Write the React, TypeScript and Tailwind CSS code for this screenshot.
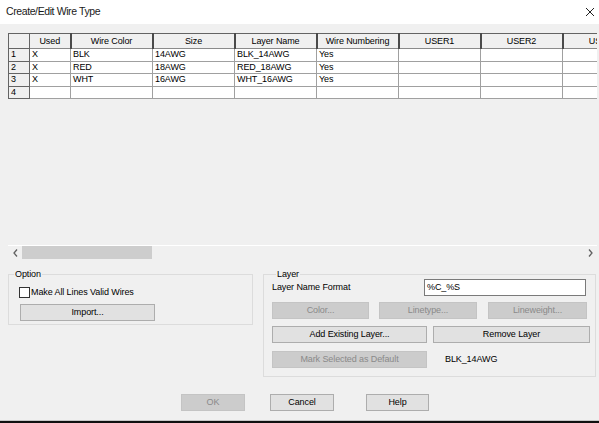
const columns = [
  { name: 'Used', cls: 'w-[41px]' },
  { name: 'Wire Color', cls: 'w-[82px]' },
  { name: 'Size', cls: 'w-[82px]' },
  { name: 'Layer Name', cls: 'w-[82px]' },
  { name: 'Wire Numbering', cls: 'w-[82px]' },
  { name: 'USER1', cls: 'w-[82px]' },
  { name: 'USER2', cls: 'w-[82px]' },
  { name: 'USER3', cls: 'w-[82px]' },
];

const rows = [
  ['X', 'BLK', '14AWG', 'BLK_14AWG', 'Yes', '', '', ''],
  ['X', 'RED', '18AWG', 'RED_18AWG', 'Yes', '', '', ''],
  ['X', 'WHT', '16AWG', 'WHT_16AWG', 'Yes', '', '', ''],
  ['', '', '', '', '', '', '', ''],
];

const Button = ({ label, cls, disabled }: { label: string; cls: string; disabled?: boolean }) => (
  <div
    className={
      'h-[17px] flex items-center justify-center border ' +
      (disabled
        ? 'bg-[#cccccc] border-[#c4c4c4] text-[#8a8a8a] '
        : 'bg-[#e1e1e1] border-[#adadad] text-black ') +
      cls
    }
  >
    {label}
  </div>
);

const Grid = () => (
  <div className="ml-[8px] w-[589px] h-[226px] flex flex-col">
    <div className="overflow-hidden w-[589px]">
      <table className="table-fixed border-collapse w-[636px] border-t border-l border-[#646464]">
        <thead>
          <tr className="h-[15px]">
            <th className="w-[21px] bg-[#f0f0f0] border-r border-b border-[#646464] p-0" />
            {columns.map((c) => (
              <th
                key={c.name}
                className={c.cls + ' bg-[#f0f0f0] border-r-2 border-b border-r-[#4a4a4a] border-b-[#8a8a8a] p-0 font-normal text-center leading-[13px] whitespace-nowrap'}
              >
                {c.name}
              </th>
            ))}
          </tr>
        </thead>
        <tbody>
          {rows.map((r, i) => (
            <tr key={i} className="h-[12.5px]">
              <td className="bg-[#f0f0f0] border-r border-b border-[#646464] p-0 pl-[2px] leading-[11px]">{i + 1}</td>
              {r.map((v, j) => (
                <td key={j} className="bg-white border-r border-b border-[#a0a0a0] p-0 pl-[2px] leading-[11px] whitespace-nowrap overflow-hidden">
                  {v}
                </td>
              ))}
            </tr>
          ))}
        </tbody>
      </table>
    </div>
    <div className="flex-1" />
    <div className="h-[14px] border-t border-white flex">
      <div className="w-[14px] flex items-center justify-center">
        <svg width="5" height="8" viewBox="0 0 5 8">
          <path d="M4 0.5 L1 4 L4 7.5" fill="none" stroke="#606060" strokeWidth="1.3" />
        </svg>
      </div>
      <div className="w-[130px] bg-[#cdcdcd]" />
      <div className="flex-1" />
      <div className="w-[14px] flex items-center justify-center">
        <svg width="5" height="8" viewBox="0 0 5 8">
          <path d="M1 0.5 L4 4 L1 7.5" fill="none" stroke="#606060" strokeWidth="1.3" />
        </svg>
      </div>
    </div>
  </div>
);

export default function App() {
  return (
    <div className="w-[599px] h-[423px] overflow-hidden flex flex-col font-['Liberation_Sans',Arial,sans-serif] text-[9px] text-black tracking-[-0.1px]">
      <div className="h-[24px] bg-white flex items-center justify-between pl-[6px] pr-[3px]">
        <span className="text-[10.5px] tracking-[-0.4px] text-[#1a1a1a]">Create/Edit Wire Type</span>
        <svg width="10" height="10" viewBox="0 0 10 10" className="mr-[1px]">
          <path d="M1 1 L9 9 M9 1 L1 9" stroke="#222" strokeWidth="1" />
        </svg>
      </div>
      <div className="h-[396px] bg-[#f0f0f0] flex flex-col pt-[9px]">
        <Grid />
        <div className="flex items-start gap-[10px] ml-[8px] mt-[9px]">
          <fieldset className="w-[245px] border border-[#dcdcdc] pb-[3px]">
            <legend className="ml-[5px] px-[1px] leading-[12px]">Option</legend>
            <div className="flex items-center mt-[7px] pl-[10px] h-[11px]">
              <div className="w-[11px] h-[11px] bg-white border border-[#333333]" />
              <span className="ml-[1px]">Make All Lines Valid Wires</span>
            </div>
            <div className="mt-[6px] pl-[11px]">
              <Button label="Import..." cls="w-[135px]" />
            </div>
          </fieldset>
          <fieldset className="w-[333px] border border-[#dcdcdc] pl-[8px] pb-[8px]">
            <legend className="ml-[4px] px-[1px] leading-[12px]">Layer</legend>
            <div className="flex items-center -mt-[1px] h-[17px]">
              <span className="w-[152px]">Layer Name Format</span>
              <div className="w-[162px] h-[17px] bg-white border border-[#7a7a7a] flex items-center pl-[2px]">%C_%S</div>
            </div>
            <div className="flex mt-[6px]">
              <Button label="Color..." cls="w-[97px]" disabled />
              <Button label="Linetype..." cls="w-[98px] ml-[10px]" disabled />
              <Button label="Lineweight..." cls="w-[99px] ml-[11px]" disabled />
            </div>
            <div className="flex mt-[7px]">
              <Button label="Add Existing Layer..." cls="w-[155px]" />
              <Button label="Remove Layer" cls="w-[157px] ml-[6px]" />
            </div>
            <div className="flex items-center mt-[8px]">
              <Button label="Mark Selected as Default" cls="w-[155px]" disabled />
              <span className="ml-[18px]">BLK_14AWG</span>
            </div>
          </fieldset>
        </div>
        <div className="flex mt-[17px] pl-[181px]">
          <Button label="OK" cls="w-[64px]" disabled />
          <Button label="Cancel" cls="w-[64px] ml-[25px]" />
          <Button label="Help" cls="w-[63px] ml-[32px]" />
        </div>
      </div>
      <div className="h-[1px] bg-[#c8c8c8]" />
      <div className="flex-1 bg-[#101010]" />
    </div>
  );
}
